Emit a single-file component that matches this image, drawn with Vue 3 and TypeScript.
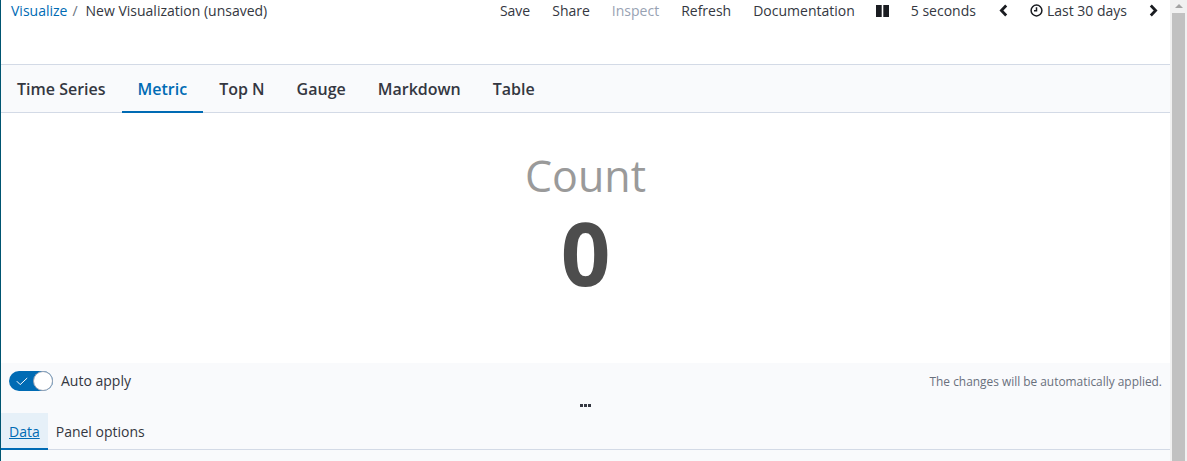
<script setup lang="ts">
const actions: { label: string; disabled?: boolean }[] = [
  { label: 'Save' },
  { label: 'Share' },
  { label: 'Inspect', disabled: true },
  { label: 'Refresh' },
  { label: 'Documentation' },
]
const tabs = ['Time Series', 'Metric', 'Top N', 'Gauge', 'Markdown', 'Table']
</script>

<template>
  <div class="page">
    <main class="main">
      <header class="topbar">
        <nav class="crumbs">
          <span class="crumb-link">Visualize</span>
          <span class="crumb-sep">/</span>
          <span>New Visualization (unsaved)</span>
        </nav>
        <div class="actions">
          <span v-for="a in actions" :key="a.label" class="action" :class="{ disabled: a.disabled }">{{ a.label }}</span>
          <svg class="pause" width="13" height="12" viewBox="0 0 13 12"><rect x="0" y="0" width="5.7" height="12" /><rect x="7.3" y="0" width="5.7" height="12" /></svg>
          <span class="action">5 seconds</span>
          <svg class="chev prev" width="9" height="13" viewBox="0 0 9 13"><path d="M7.2 1.5 2.4 6.5 7.2 11.5" /></svg>
          <span class="time">
            <svg width="13" height="13" viewBox="0 0 13 13"><circle cx="6.5" cy="6.5" r="5.4" /><path d="M6.5 3.2v3.6H4" /></svg>
            Last 30 days
          </span>
          <svg class="chev next" width="9" height="13" viewBox="0 0 9 13"><path d="M1.8 1.5 6.6 6.5 1.8 11.5" /></svg>
        </div>
      </header>

      <div class="tabs">
        <div v-for="t in tabs" :key="t" class="tab" :class="{ active: t === 'Metric' }">{{ t }}</div>
      </div>

      <section class="metric">
        <div class="metric-title">Count</div>
        <div class="metric-value">0</div>
      </section>

      <section class="panel">
        <div class="apply-row">
          <div class="apply-left">
            <span class="switch">
              <svg class="check" width="12" height="9" viewBox="0 0 12 9"><path d="M.8 4.2 4.2 7.6 11.2 1" /></svg>
              <span class="knob"></span>
            </span>
            <span class="apply-label">Auto apply</span>
          </div>
          <span class="apply-note">The changes will be automatically applied.</span>
        </div>
        <div class="grip"><i></i><i></i><i></i></div>
        <div class="subtabs">
          <div class="subtab active"><span>Data</span></div>
          <div class="subtab">Panel options</div>
        </div>
      </section>
    </main>
    <aside class="scrollbar">
      <span class="arrow"></span>
      <span class="thumb"></span>
    </aside>
  </div>
</template>

<style>
html, body { margin: 0; overflow: hidden; background: #fff; }
</style>

<style scoped>
.page {
  display: flex;
  width: 1187px;
  height: 461px;
  overflow: hidden;
  font-family: "Open Sans", "Noto Sans", sans-serif;
  color: #343741;
  background: #fff;
}
.main {
  flex: 1;
  min-width: 0;
  display: flex;
  flex-direction: column;
  border-left: 1px solid #005571;
}
.topbar {
  height: 65px;
  flex: none;
  box-sizing: border-box;
  border-bottom: 1px solid #d3dae6;
  display: flex;
  justify-content: space-between;
  align-items: flex-start;
  padding: 1px 12px 0 10px;
  font-size: 14px;
  line-height: 19px;
}
.crumbs { display: flex; }
.crumb-link { color: #006bb4; }
.crumb-sep { margin: 0 8px 0 5px; color: #69707d; }
.actions { display: flex; align-items: center; height: 19px; }
.action { margin-right: 22px; white-space: nowrap; }
.action.disabled { color: #98a2b3; }
.pause { fill: #1a1c21; margin-right: 22px; margin-left: -1px; }
.chev { fill: none; stroke: #1a1c21; stroke-width: 2.8; }
.prev { margin-right: 22px; margin-left: 1px; }
.time { display: flex; align-items: center; gap: 4px; white-space: nowrap; margin-right: 22px; }
.time svg { fill: none; stroke: #1a1c21; stroke-width: 1.5; }
.tabs {
  height: 48px;
  flex: none;
  box-sizing: border-box;
  background: #f9fafc;
  border-bottom: 1px solid #d3dae6;
  display: flex;
}
.tab {
  padding: 0 16px;
  font-size: 16px;
  font-weight: 600;
  line-height: 48px;
  height: 48px;
  color: #343741;
  white-space: nowrap;
}
.tab.active {
  color: #006bb4;
  box-shadow: inset 0 -2px 0 #006bb4;
}
.metric {
  height: 250px;
  flex: none;
  display: flex;
  flex-direction: column;
  align-items: center;
  background: #fff;
}
.metric-title {
  font-size: 43px;
  line-height: 58px;
  margin-top: 34px;
  color: #9a9a9a;
}
.metric-value {
  font-size: 87px;
  font-weight: 700;
  line-height: 92px;
  margin-top: 1px;
  color: #4d4d4d;
}
.panel {
  flex: 1;
  background: #f9fafc;
  display: flex;
  flex-direction: column;
}
.apply-row {
  display: flex;
  justify-content: space-between;
  align-items: center;
  height: 36px;
  padding: 0 8px;
}
.apply-left { display: flex; align-items: center; gap: 8px; }
.switch {
  position: relative;
  width: 44px;
  height: 20px;
  border-radius: 10px;
  background: #006bb4;
  display: block;
}
.check { position: absolute; left: 7px; top: 6px; fill: none; stroke: #fff; stroke-width: 1; }
.knob {
  position: absolute;
  right: 0;
  top: 0;
  width: 18px;
  height: 18px;
  border: 1px solid #98a2b3;
  border-radius: 50%;
  background: #fff;
}
.apply-label { font-size: 14px; line-height: 20px; color: #343741; }
.apply-note { font-size: 11.9px; color: #69707d; }
.grip {
  display: flex;
  justify-content: center;
  gap: 1px;
  height: 3px;
  margin-top: 5px;
  flex: none;
}
.grip i { width: 3px; height: 3px; background: #343741; }
.subtabs {
  display: flex;
  margin-top: 6px;
  height: 37px;
  flex: none;
  box-sizing: border-box;
  border-bottom: 1px solid #d3dae6;
}
.subtab {
  padding: 0 8px;
  font-size: 14px;
  line-height: 37px;
  height: 37px;
  box-sizing: border-box;
}
.subtab.active {
  background: #e6f0f8;
  color: #006bb4;
  box-shadow: inset 0 -2px 0 #006bb4;
}
.subtab.active span { text-decoration: underline; }
.scrollbar {
  width: 17px;
  flex: none;
  background: #f1f1f1;
  display: flex;
  flex-direction: column;
  align-items: center;
}
.arrow {
  margin-top: 4px;
  width: 0;
  height: 0;
  border-left: 4px solid transparent;
  border-right: 4px solid transparent;
  border-bottom: 4px solid #a3a3a3;
  flex: none;
}
.thumb {
  margin-top: 5px;
  width: 13px;
  flex: 1;
  background: #c1c1c1;
}
</style>
